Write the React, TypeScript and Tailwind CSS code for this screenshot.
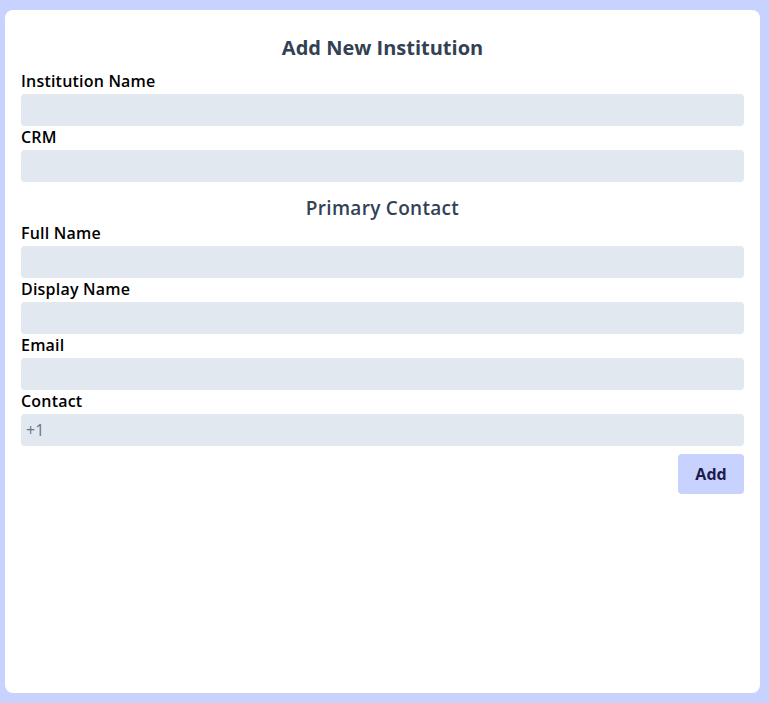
import React from "react";

const Field = ({ label, value }: { label: string; value?: string }) => (
  <div className="flex flex-col">
    <label className="h-6 text-[16px] leading-[22px] font-semibold tracking-[0.2px] text-black">{label}</label>
    <input
      readOnly
      value={value ?? ""}
      className="h-8 w-full rounded bg-[#e2e8f0] px-[5px] text-[16px] text-[#64748b] outline-none"
    />
  </div>
);

export default function App() {
  return (
    <div
      className="h-[703px] w-full bg-[#c7d2fe] pt-[10px] pb-[10px] pl-[5px] pr-[9px]"
      style={{ fontFamily: '"Open Sans", "Noto Sans", sans-serif' }}
    >
      <div className="flex h-full flex-col rounded-lg bg-white px-4 pt-4">
        <h1 className="mt-2 mb-2 text-center text-[20px] leading-7 font-bold text-[#334155]">
          Add New Institution
        </h1>
        <Field label="Institution Name" />
        <Field label="CRM" />
        <h2 className="mt-3 text-center text-[19px] leading-7 font-semibold tracking-[0.3px] text-[#334155]">
          Primary Contact
        </h2>
        <Field label="Full Name" />
        <Field label="Display Name" />
        <Field label="Email" />
        <Field label="Contact" value="+1" />
        <div className="mt-2 flex justify-end">
          <button className="h-10 w-[66px] rounded bg-[#c7d2fe] text-[16px] font-bold text-[#1e1b4b]">
            Add
          </button>
        </div>
      </div>
    </div>
  );
}
